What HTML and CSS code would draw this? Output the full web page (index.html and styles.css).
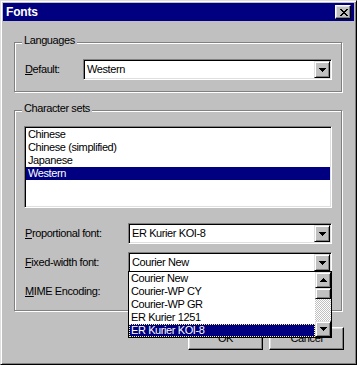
FILE: index.html
```html
<!DOCTYPE html>
<html>
<head>
<meta charset="utf-8">
<link rel="stylesheet" href="styles.css">
</head>
<body>
<div class="window">
  <div class="titlebar">
    <span class="title">Fonts</span>
    <span class="close">
      <svg width="8" height="7" viewBox="0 0 8 7" shape-rendering="crispEdges"><path d="M0 0h2v1H0zM6 0h2v1H6zM1 1h2v1H1zM5 1h2v1H5zM2 2h4v1H2zM3 3h2v1H3zM2 4h4v1H2zM1 5h2v1H1zM5 5h2v1H5zM0 6h2v1H0zM6 6h2v1H6z" fill="#000"/></svg>
    </span>
  </div>
  <div class="content">
    <div class="group group-lang">
      <span class="legend">Languages</span>
      <div class="row row-first">
        <span class="label"><u>D</u>efault:</span>
        <div class="combo combo-wide">
          <span class="combo-text">Western</span>
          <span class="drop-btn"><svg width="7" height="4" viewBox="0 0 7 4" shape-rendering="crispEdges"><path d="M0 0h7v1H0zM1 1h5v1H1zM2 2h3v1H2zM3 3h1v1H3z" fill="#000"/></svg></span>
        </div>
      </div>
    </div>
    <div class="group group-chars">
      <span class="legend">Character sets</span>
      <div class="listbox">
        <div class="item">Chinese</div>
        <div class="item">Chinese (simplified)</div>
        <div class="item">Japanese</div>
        <div class="item selected">Western</div>
      </div>
      <div class="row row-prop">
        <span class="label"><u>P</u>roportional font:</span>
        <div class="combo combo-narrow">
          <span class="combo-text">ER Kurier KOI-8</span>
          <span class="drop-btn"><svg width="7" height="4" viewBox="0 0 7 4" shape-rendering="crispEdges"><path d="M0 0h7v1H0zM1 1h5v1H1zM2 2h3v1H2zM3 3h1v1H3z" fill="#000"/></svg></span>
        </div>
      </div>
      <div class="row row-next">
        <span class="label"><u>F</u>ixed-width font:</span>
        <div class="combo combo-narrow">
          <span class="combo-text">Courier New</span>
          <span class="drop-btn"><svg width="7" height="4" viewBox="0 0 7 4" shape-rendering="crispEdges"><path d="M0 0h7v1H0zM1 1h5v1H1zM2 2h3v1H2zM3 3h1v1H3z" fill="#000"/></svg></span>
          <div class="dropdown">
            <div class="dd-items">
              <div class="dd-item">Courier New</div>
              <div class="dd-item">Courier-WP CY</div>
              <div class="dd-item">Courier-WP GR</div>
              <div class="dd-item">ER Kurier 1251</div>
              <div class="dd-item dd-selected">ER Kurier KOI-8</div>
            </div>
            <div class="scrollbar">
              <span class="sb-btn"><svg width="7" height="4" viewBox="0 0 7 4" shape-rendering="crispEdges"><path d="M3 0h1v1H3zM2 1h3v1H2zM1 2h5v1H1zM0 3h7v1H0z" fill="#000"/></svg></span>
              <span class="sb-thumb"></span>
              <span class="sb-track"></span>
              <span class="sb-btn"><svg width="7" height="4" viewBox="0 0 7 4" shape-rendering="crispEdges"><path d="M0 0h7v1H0zM1 1h5v1H1zM2 2h3v1H2zM3 3h1v1H3z" fill="#000"/></svg></span>
            </div>
          </div>
        </div>
      </div>
      <div class="row row-next">
        <span class="label"><u>M</u>IME Encoding:</span>
        <div class="combo combo-narrow">
          <span class="combo-text"></span>
          <span class="drop-btn"><svg width="7" height="4" viewBox="0 0 7 4" shape-rendering="crispEdges"><path d="M0 0h7v1H0zM1 1h5v1H1zM2 2h3v1H2zM3 3h1v1H3z" fill="#000"/></svg></span>
        </div>
      </div>
    </div>
    <div class="buttons">
      <span class="button">OK</span>
      <span class="button">Cancel</span>
    </div>
  </div>
</div>
</body>
</html>
```
FILE: styles.css
```css
* { box-sizing: border-box; }
html, body { margin: 0; padding: 0; background: #c0c0c0; }
body {
  font-family: "Liberation Sans", Arial, sans-serif;
  font-size: 11px;
  letter-spacing: -0.4px;
  color: #000;
}
.window {
  width: 357px;
  height: 365px;
  background: #c0c0c0;
  border: 1px solid;
  border-color: #dfdfdf #000 #000 #dfdfdf;
  box-shadow: inset 1px 1px #fff, inset -1px -1px #808080;
  padding: 2px;
  display: flex;
  flex-direction: column;
}
.titlebar {
  height: 18px;
  background: #000080;
  color: #fff;
  display: flex;
  align-items: center;
  justify-content: space-between;
  padding: 0 3px 0 3px;
}
.title {
  font-weight: bold;
  font-size: 12px;
  letter-spacing: -0.2px;
  line-height: 13px;
}
.close {
  width: 16px;
  height: 14px;
  background: #c0c0c0;
  border: 1px solid;
  border-color: #fff #000 #000 #fff;
  box-shadow: inset -1px -1px #808080, inset 1px 1px #dfdfdf;
  display: flex;
  align-items: center;
  justify-content: center;
  padding-left: 1px;
}
.close svg { display: block; }
.content {
  display: flex;
  flex-direction: column;
  padding: 21px 10px 0 11px;
}
.group {
  display: flex;
  flex-direction: column;
  border: 1px solid #808080;
  box-shadow: inset 1px 1px #fff, 1px 1px #fff;
  margin-right: 2px;
  padding: 0 9px;
}
.group-lang { padding-bottom: 11px; margin-bottom: 18px; }
.group-chars { padding-bottom: 8px; }
.legend {
  align-self: flex-start;
  margin: -9px 0 0 -2px;
  padding: 0 2px;
  background: #c0c0c0;
  line-height: 13px;
}
.row {
  display: flex;
  align-items: center;
}
.row-first { margin-top: 12px; }
.row-prop { margin-top: 15px; }
.row-next { margin-top: 8px; }
.label {
  padding-left: 1px;
  line-height: 13px;
}
.combo {
  position: relative;
  margin-left: auto;
  height: 21px;
  background: #fff;
  border: 1px solid;
  border-color: #808080 #fff #fff #808080;
  box-shadow: inset 1px 1px #000, inset -1px -1px #dfdfdf;
  padding: 1px;
  display: flex;
  align-items: center;
}
.combo-wide { width: 249px; }
.combo-narrow { width: 204px; }
.combo-text {
  flex: 1;
  padding-left: 2px;
  line-height: 13px;
}
.drop-btn, .sb-btn {
  width: 16px;
  height: 17px;
  background: #c0c0c0;
  border: 1px solid;
  border-color: #dfdfdf #000 #000 #dfdfdf;
  box-shadow: inset 1px 1px #fff, inset -1px -1px #808080;
  display: flex;
  align-items: center;
  justify-content: center;
}
.drop-btn svg, .sb-btn svg { display: block; }
.listbox {
  margin-top: 11px;
  height: 82px;
  background: #fff;
  border: 1px solid;
  border-color: #808080 #fff #fff #808080;
  box-shadow: inset 1px 1px #000, inset -1px -1px #dfdfdf;
  padding: 1px;
}
.item {
  height: 13px;
  line-height: 13px;
  padding-left: 2px;
  white-space: nowrap;
}
.selected {
  background: #000080;
  color: #fff;
}
.dropdown {
  position: absolute;
  left: -1px;
  top: calc(100% - 1px);
  width: 204px;
  background: #fff;
  border: 1px solid #000;
  display: flex;
  z-index: 5;
}
.dd-items { flex: 1; }
.dd-item {
  height: 13px;
  line-height: 13px;
  padding-left: 2px;
  white-space: nowrap;
}
.dd-selected {
  background: #000080;
  color: #fff;
  border: 1px dotted #ffff80;
  line-height: 11px;
  padding-left: 1px;
}
.scrollbar {
  width: 16px;
  display: flex;
  flex-direction: column;
}
.sb-btn { height: 16px; }
.sb-thumb {
  height: 11px;
  background: #c0c0c0;
  border: 1px solid;
  border-color: #dfdfdf #000 #000 #dfdfdf;
  box-shadow: inset 1px 1px #fff, inset -1px -1px #808080;
}
.sb-track {
  flex: 1;
  background-color: #c0c0c0;
  background-image: conic-gradient(#fff 25%, #c0c0c0 0 50%, #fff 0 75%, #c0c0c0 0);
  background-size: 2px 2px;
}
.buttons {
  display: flex;
  justify-content: flex-end;
  gap: 6px;
  margin-top: 16px;
}
.button {
  width: 75px;
  height: 23px;
  background: #c0c0c0;
  border: 1px solid;
  border-color: #fff #000 #000 #fff;
  box-shadow: inset -1px -1px #808080, inset 1px 1px #dfdfdf;
  display: flex;
  align-items: center;
  justify-content: center;
  line-height: 13px;
}
```
